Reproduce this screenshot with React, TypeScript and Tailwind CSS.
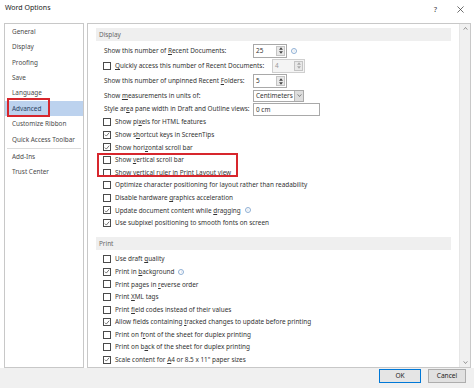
import React from 'react';

// label with a mnemonic: the char after "&" gets underlined
function Mn({ text }: { text: string }) {
	const i = text.indexOf('&');
	if (i < 0) return <>{text}</>;
	return (
		<>
			{text.slice(0, i)}
			<span className="underline underline-offset-1">{text[i + 1]}</span>
			{text.slice(i + 2)}
		</>
	);
}

function Check({ on }: { on?: boolean }) {
	return (
		<span className="w-[8px] h-[8px] border border-[#4a4a4a] bg-white flex items-center justify-center shrink-0">
			{on && (
				<svg viewBox="0 0 8 8" className="w-[7px] h-[7px]">
					<path d="M1.2 4.2 L3.1 6.1 L6.9 1.6" stroke="#333" strokeWidth="0.9" fill="none" />
				</svg>
			)}
		</span>
	);
}

function Info() {
	return (
		<span className="w-[6px] h-[6px] rounded-full border border-[#8fb0d4] text-[#8fb0d4] text-[4px] leading-none flex items-center justify-center shrink-0">
			i
		</span>
	);
}

function CheckRow({ label, on, info }: { label: string; on?: boolean; info?: boolean }) {
	return (
		<div className="h-[12.6px] flex items-center pl-[15px] gap-[4px] whitespace-nowrap">
			<Check on={on} />
			<span>
				<Mn text={label} />
			</span>
			{info && <Info />}
		</div>
	);
}

function Spin({ value, disabled, w = 34 }: { value: string; disabled?: boolean; w?: number }) {
	return (
		<div
			className={`h-[14px] flex border ${disabled ? 'border-[#cfcfcf] bg-[#f4f4f4] text-[#9a9a9a]' : 'border-[#a9a9a9] bg-white'}`}
			style={{ width: w }}
		>
			<span className="flex-1 pl-[2px] leading-[12px]">{value}</span>
			<span className="w-[9px] my-[1px] mr-[1px] flex flex-col bg-[#e8e8e8] border border-[#c4c4c4]">
				<span className="flex-1 flex items-center justify-center">
					<svg viewBox="0 0 6 4" className="w-[4px] h-[3px]">
						<path d="M0 4 L3 0 L6 4 Z" fill={disabled ? '#aaa' : '#444'} />
					</svg>
				</span>
				<span className="flex-1 flex items-center justify-center">
					<svg viewBox="0 0 6 4" className="w-[4px] h-[3px]">
						<path d="M0 0 L3 4 L6 0 Z" fill={disabled ? '#aaa' : '#444'} />
					</svg>
				</span>
			</span>
		</div>
	);
}

function Header({ title }: { title: string }) {
	return <div className="mx-[8px] h-[13px] bg-[#efefef] pl-[3px] flex items-center text-[#666]">{title}</div>;
}

const nav1 = ['General', 'Display', 'Proofing', 'Save', 'Language', 'Advanced', 'Customize Ribbon', 'Quick Access Toolbar'];
const nav2 = ['Add-Ins', 'Trust Center'];

const displayChecks: { label: string; on?: boolean; info?: boolean }[] = [
	{ label: 'Show pi&xels for HTML features' },
	{ label: 'Show s&hortcut keys in ScreenTips', on: true },
	{ label: 'Show hori&zontal scroll bar', on: true },
];

const displayChecks2: { label: string; on?: boolean; info?: boolean }[] = [
	{ label: 'Optimize character positioning for layout rather than readability' },
	{ label: 'Disable hardware &graphics acceleration' },
	{ label: 'Update document content while &dragging', on: true, info: true },
	{ label: 'Use subpixel positioning to smooth fonts on screen', on: true },
];

const printChecks: { label: string; on?: boolean; info?: boolean }[] = [
	{ label: 'Use draft &quality' },
	{ label: 'Print in &background', on: true, info: true },
	{ label: 'Print pages in &reverse order' },
	{ label: 'Print &XML tags' },
	{ label: 'Print &field codes instead of their values' },
	{ label: 'Allow fields containing &tracked changes to update before printing', on: true },
	{ label: 'Print on f&ront of the sheet for duplex printing' },
	{ label: 'Print on b&ack of the sheet for duplex printing' },
	{ label: 'Scale content for &A4 or 8.5 x 11" paper sizes', on: true },
];

export default function App() {
	return (
		<div className="w-[474px] h-[388px] bg-white flex flex-col overflow-hidden font-['Noto_Sans',sans-serif] text-[6.4px] text-[#333]">
			{/* title bar */}
			<div className="h-[23px] shrink-0 flex items-start justify-between pt-[3px] pl-[5px] pr-[10px]">
				<span className="text-[7px] text-[#222]">Word Options</span>
				<div className="flex items-center gap-[20px] pt-[1px]">
					<span className="text-[7.5px] text-[#333]">?</span>
					<svg viewBox="0 0 8 8" className="w-[7px] h-[7px]">
						<path d="M0.5 0.5 L7.5 7.5 M7.5 0.5 L0.5 7.5" stroke="#333" strokeWidth="0.8" />
					</svg>
				</div>
			</div>

			{/* body */}
			<div className="h-[345px] shrink-0 flex pl-[4px] gap-[3px]">
				{/* nav */}
				<div className="w-[80px] border border-[#c8c8c8] bg-white text-[#4a4a4a]">
					{nav1.map((n) => (
						<div
							key={n}
							className={`relative h-[15.4px] flex items-center pl-[7px] ${n === 'Advanced' ? 'bg-[#bcd2ee] text-[#2a3f5e]' : ''}`}
						>
							{n}
							{n === 'Advanced' && (
								<span className="absolute left-[2px] -top-[3px] w-[43px] h-[19px] border-2 border-[#d7262d]" />
							)}
						</div>
					))}
					<div className="mx-[2px] mt-[1px] border-t border-[#dcdcdc]" />
					{nav2.map((n) => (
						<div key={n} className="h-[15.4px] flex items-center pl-[7px]">
							{n}
						</div>
					))}
				</div>

				{/* main panel */}
				<div className="w-[384px] border border-[#c8c8c8] flex">
					<div className="flex-1 overflow-hidden pt-[4px]">
						<Header title="Display" />
						<div className="mt-[2px]">
							<div className="h-[15px] flex items-center pl-[16px]">
								<span className="w-[149px]">
									<Mn text="Show this number of &Recent Documents:" />
								</span>
								<Spin value="25" />
								<span className="ml-[4px]">
									<Info />
								</span>
							</div>
							<div className="h-[15px] flex items-center pl-[15px]">
								<Check />
								<span className="w-[157px] ml-[4px] whitespace-nowrap">
									<Mn text="&Quickly access this number of Recent Documents:" />
								</span>
								<Spin value="4" disabled w={33} />
							</div>
							<div className="h-[16px] flex items-center pl-[16px]">
								<span className="w-[149px]">
									<Mn text="Show this number of unpinned Recent &Folders:" />
								</span>
								<Spin value="5" />
							</div>
							<div className="h-[13px] flex items-center pl-[16px]">
								<span className="w-[149px]">
									<Mn text="Show &measurements in units of:" />
								</span>
								<div className="w-[51px] h-[12px] flex border border-[#a9a9a9] bg-white">
									<span className="flex-1 pl-[2px] leading-[10px]">Centimeters</span>
									<span className="w-[9px] bg-[#dedede] border-l border-[#b5b5b5] flex items-center justify-center">
										<svg viewBox="0 0 6 4" className="w-[5px] h-[3px]">
											<path d="M0.5 0.5 L3 3.3 L5.5 0.5" stroke="#444" strokeWidth="0.8" fill="none" />
										</svg>
									</span>
								</div>
							</div>
							<div className="h-[14px] flex items-center pl-[16px]">
								<span className="w-[149px] whitespace-nowrap">
									<Mn text="Style ar&ea pane width in Draft and Outline views:" />
								</span>
								<div className="w-[67px] h-[13px] border border-[#a9a9a9] bg-white pl-[2px] leading-[11px]">0 cm</div>
							</div>
						</div>
						{displayChecks.map((c) => (
							<CheckRow key={c.label} {...c} />
						))}
						<div className="relative">
							<CheckRow label="Show &vertical scroll bar" />
							<CheckRow label="Show verti&cal ruler in Print Layout view" />
							<span className="absolute left-[9px] -top-[1px] w-[141px] h-[24px] border-2 border-[#d7262d]" />
						</div>
						{displayChecks2.map((c) => (
							<CheckRow key={c.label} {...c} />
						))}
						<div className="mt-[7.5px] mb-[3px]">
							<Header title="Print" />
						</div>
						{printChecks.map((c) => (
							<CheckRow key={c.label} {...c} />
						))}
					</div>
					{/* scrollbar */}
					<div className="w-[11px] bg-[#f0f0f0] border-l border-[#e6e6e6] flex flex-col justify-between items-center py-[3px]">
						<svg viewBox="0 0 6 4" className="w-[5px] h-[3px]">
							<path d="M0.5 3.5 L3 0.7 L5.5 3.5" stroke="#555" strokeWidth="0.8" fill="none" />
						</svg>
						<svg viewBox="0 0 6 4" className="w-[5px] h-[3px]">
							<path d="M0.5 0.5 L3 3.3 L5.5 0.5" stroke="#555" strokeWidth="0.8" fill="none" />
						</svg>
					</div>
				</div>
			</div>

			{/* footer */}
			<div className="flex-1 bg-[#f0f0f0] flex justify-end items-start pt-[1px] pr-[8px] gap-[7px]">
				<button className="w-[42px] h-[14px] bg-[#e5e5e5] border border-[#0078d7] text-[6.6px] text-[#222]">OK</button>
				<button className="w-[38px] h-[14px] bg-[#e1e1e1] border border-[#adadad] text-[6.6px] text-[#222]">Cancel</button>
			</div>
		</div>
	);
}
